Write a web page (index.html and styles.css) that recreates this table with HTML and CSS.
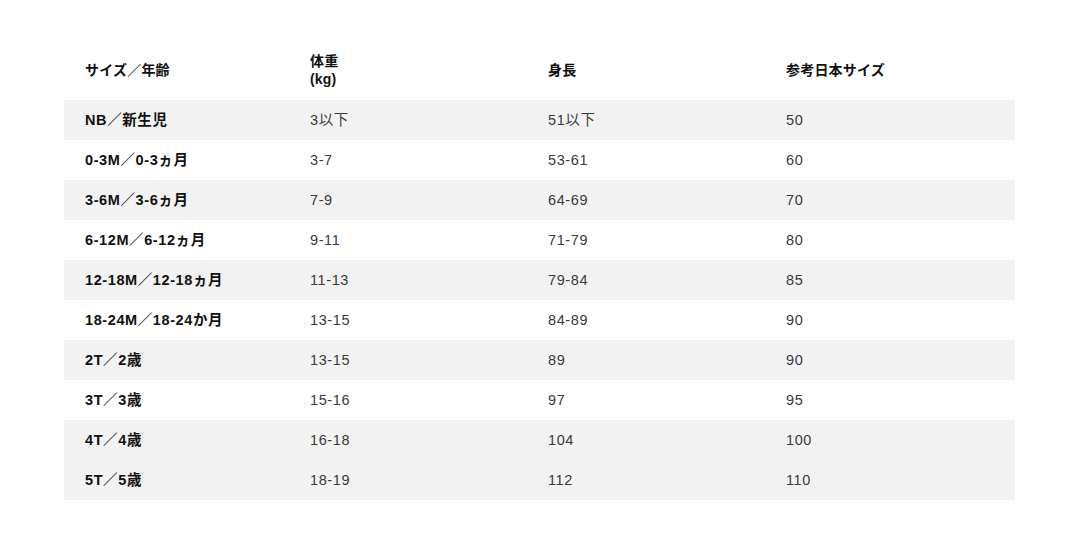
FILE: index.html
```html
<!DOCTYPE html>
<html lang="ja">
<head>
<meta charset="utf-8">
<link rel="stylesheet" href="styles.css">
</head>
<body>
<div class="page">
<table class="size-table">
  <colgroup>
    <col class="c1"><col class="c2"><col class="c3"><col class="c4">
  </colgroup>
  <thead>
    <tr><th>サイズ／年齢</th><th>体重<br>(kg)</th><th>身長</th><th>参考日本サイズ</th></tr>
  </thead>
  <tbody>
    <tr class="alt"><th>NB／新生児</th><td>3以下</td><td>51以下</td><td>50</td></tr>
    <tr><th>0-3M／0-3ヵ月</th><td>3-7</td><td>53-61</td><td>60</td></tr>
    <tr class="alt"><th>3-6M／3-6ヵ月</th><td>7-9</td><td>64-69</td><td>70</td></tr>
    <tr><th>6-12M／6-12ヵ月</th><td>9-11</td><td>71-79</td><td>80</td></tr>
    <tr class="alt"><th>12-18M／12-18ヵ月</th><td>11-13</td><td>79-84</td><td>85</td></tr>
    <tr><th>18-24M／18-24か月</th><td>13-15</td><td>84-89</td><td>90</td></tr>
    <tr class="alt"><th>2T／2歳</th><td>13-15</td><td>89</td><td>90</td></tr>
    <tr><th>3T／3歳</th><td>15-16</td><td>97</td><td>95</td></tr>
    <tr class="alt"><th>4T／4歳</th><td>16-18</td><td>104</td><td>100</td></tr>
    <tr class="alt"><th>5T／5歳</th><td>18-19</td><td>112</td><td>110</td></tr>
  </tbody>
</table>
</div>
</body>
</html>
```
FILE: styles.css
```css
html, body {
  margin: 0;
  padding: 0;
  background: #ffffff;
}
body {
  font-family: "Liberation Sans", "Noto Sans CJK JP", sans-serif;
  color: #222;
}
.page {
  padding: 40px 65px 0 64px;
}
.size-table {
  border-collapse: collapse;
  width: 951px;
  table-layout: fixed;
  font-size: 14.5px;
  letter-spacing: 0.6px;
}
.c1 { width: 225px; }
.c2 { width: 238px; }
.c3 { width: 238px; }
.c4 { width: 250px; }
.size-table th,
.size-table td {
  text-align: left;
  padding: 0 0 1px 21px;
  height: 39px;
  line-height: 18px;
  vertical-align: middle;
}
.size-table thead th {
  height: 59px;
  font-size: 14px;
  letter-spacing: 0.2px;
  font-weight: 700;
  color: #111;
}
.size-table tbody th {
  font-weight: 700;
  color: #111;
}
.size-table tbody td {
  font-weight: 400;
  color: #3a3a3a;
}
.size-table tr.alt {
  background: #f2f2f2;
}
```
